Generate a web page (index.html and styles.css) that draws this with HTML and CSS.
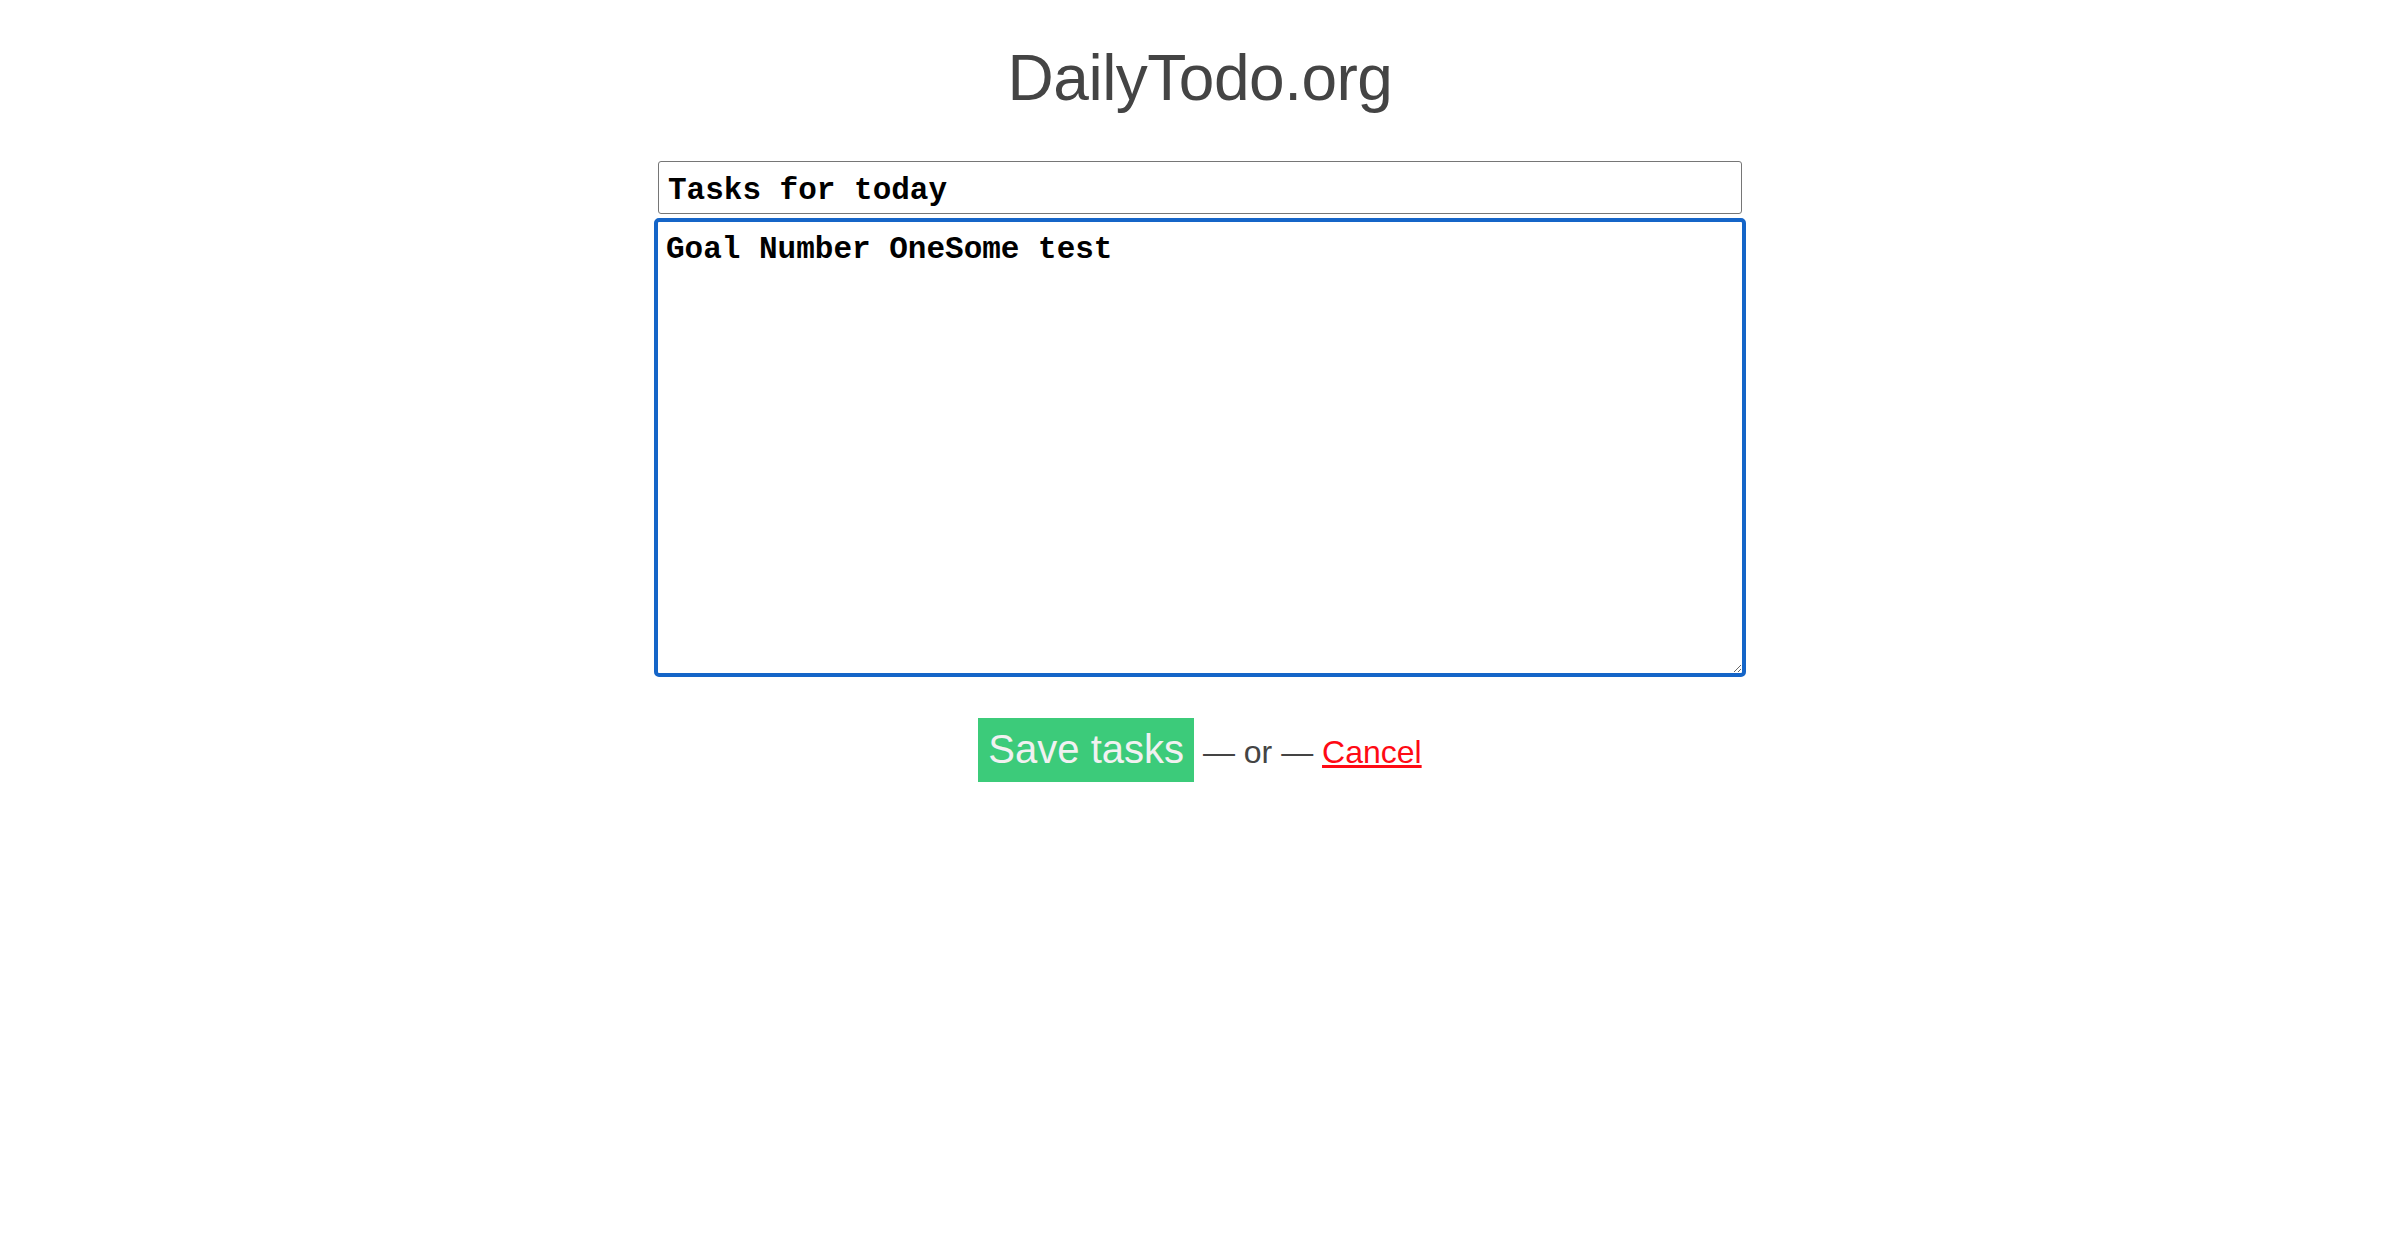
FILE: index.html
```html
<!DOCTYPE html>
<html lang="en">
<head>
<meta charset="utf-8">
<title>DailyTodo.org</title>
<link rel="stylesheet" href="styles.css">
</head>
<body>
<main class="page">
  <h1 class="title">DailyTodo.org</h1>
  <form class="task-form">
    <input class="task-title" type="text" value="Tasks for today">
    <textarea class="task-body" id="task-body">Goal Number OneSome test</textarea>
    <div class="actions">
      <button class="save-btn" type="button">Save tasks</button> <span class="sep">— or —</span> <a class="cancel" href="#">Cancel</a>
    </div>
  </form>
</main>
<script src="app.js"></script>
</body>
</html>
```

FILE: styles.css
```css
html, body {
  margin: 0;
  padding: 0;
  background: #fff;
}

body {
  font-family: "Liberation Sans", Arial, sans-serif;
  color: #444;
}

.page {
  display: flex;
  flex-direction: column;
  align-items: center;
}

.title {
  margin: 46px 0 0;
  font-size: 64px;
  line-height: 1;
  font-weight: 400;
  letter-spacing: -0.5px;
  color: #444;
}

.task-form {
  margin-top: 51px;
  display: flex;
  flex-direction: column;
  align-items: center;
}

.task-title {
  box-sizing: border-box;
  width: 1084px;
  height: 53px;
  margin: 0;
  padding: 11px 9px 5px;
  border: 1px solid #767676;
  border-radius: 3px;
  font-family: "Liberation Mono", "Courier New", monospace;
  font-size: 31px;
  font-weight: 700;
  line-height: normal;
  color: #000;
  background: #fff;
  outline: none;
}

.task-body {
  box-sizing: border-box;
  display: block;
  width: 1092px;
  height: 459px;
  margin: 4px 0 0;
  padding: 10px 8px;
  border: 4px solid #1565c8;
  border-radius: 5px;
  font-family: "Liberation Mono", "Courier New", monospace;
  font-size: 31px;
  font-weight: 700;
  line-height: normal;
  color: #000;
  caret-color: #000;
  background: #fff;
  outline: none;
  resize: both;
}

.actions {
  margin-top: 41px;
  text-align: center;
  font-size: 32px;
  color: #444;
}

.save-btn {
  display: inline-block;
  margin: 0;
  padding: 8px 10px 10px;
  border: none;
  border-radius: 0;
  background: #3ccb7a;
  color: #f1f1f1;
  font-family: "Liberation Sans", Arial, sans-serif;
  font-size: 40px;
  line-height: 46px;
  vertical-align: baseline;
  cursor: pointer;
}

.sep {
  color: #444;
}

.cancel {
  color: #ff0a14;
  text-decoration: underline;
}
```

FILE: app.js
```js
var ta = document.getElementById('task-body');
ta.focus();
var end = ta.value.length;
ta.setSelectionRange(end, end);
```
